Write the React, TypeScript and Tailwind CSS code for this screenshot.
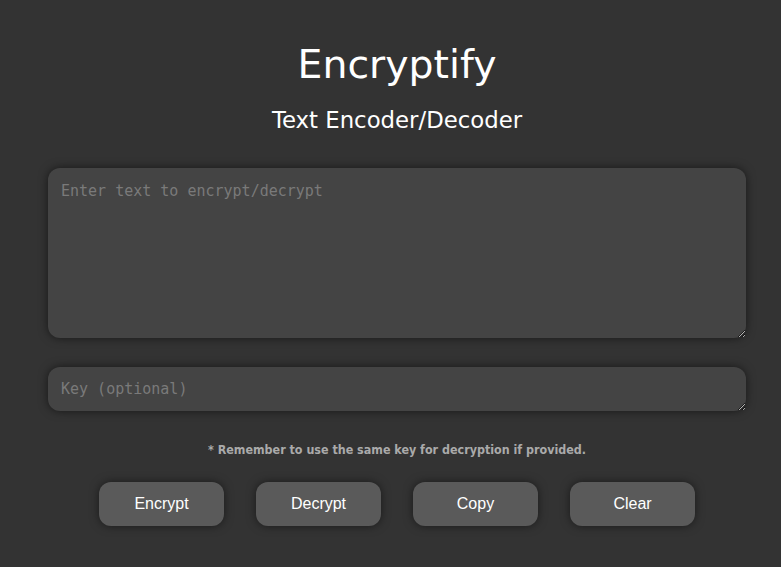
import { useState } from 'react';

const BUTTONS = ['Encrypt', 'Decrypt', 'Copy', 'Clear'];

export default function App() {
  const [text, setText] = useState('');
  const [key, setKey] = useState('');

  return (
    <div className="min-h-[567px] bg-[#333333] pl-[13px] flex flex-col items-center font-['DejaVu_Sans',sans-serif] text-white">
      <h1 className="mt-[40px] text-[39.4px] leading-[48px]">Encryptify</h1>
      <h2 className="mt-[18px] text-[22.8px] leading-[28px]">Text Encoder/Decoder</h2>

      <div className="mt-[34px] w-[698px] flex flex-col">
        <textarea
          value={text}
          onChange={(e) => setText(e.target.value)}
          placeholder="Enter text to encrypt/decrypt"
          className="h-[170px] rounded-xl bg-[#444444] pl-[13px] pr-3 pt-[13px] pb-3 font-['DejaVu_Sans_Mono',monospace] text-[15px] leading-5 text-white placeholder:text-[#7a7a7a] outline-none shadow-[0_0_10px_rgba(0,0,0,0.55)]"
        />
        <textarea
          value={key}
          onChange={(e) => setKey(e.target.value)}
          placeholder="Key (optional)"
          rows={1}
          className="mt-[29px] h-[44px] rounded-xl bg-[#444444] pl-[13px] pr-3 py-3 font-['DejaVu_Sans_Mono',monospace] text-[15px] leading-5 text-white placeholder:text-[#7a7a7a] outline-none shadow-[0_0_10px_rgba(0,0,0,0.55)]"
        />
      </div>

      <p className="mt-[31px] font-['DejaVu_Sans_Condensed','DejaVu_Sans',sans-serif] text-[12.4px] leading-4 font-bold text-[#aaaaaa]">
        * Remember to use the same key for decryption if provided.
      </p>

      <div className="mt-[24px] flex gap-8">
        {BUTTONS.map((label) => (
          <button
            key={label}
            className="w-[125px] h-[44px] rounded-xl bg-[#5a5a5a] font-['Liberation_Sans',sans-serif] text-base text-white shadow-[0_0_10px_rgba(0,0,0,0.5)]"
          >
            {label}
          </button>
        ))}
      </div>
    </div>
  );
}
